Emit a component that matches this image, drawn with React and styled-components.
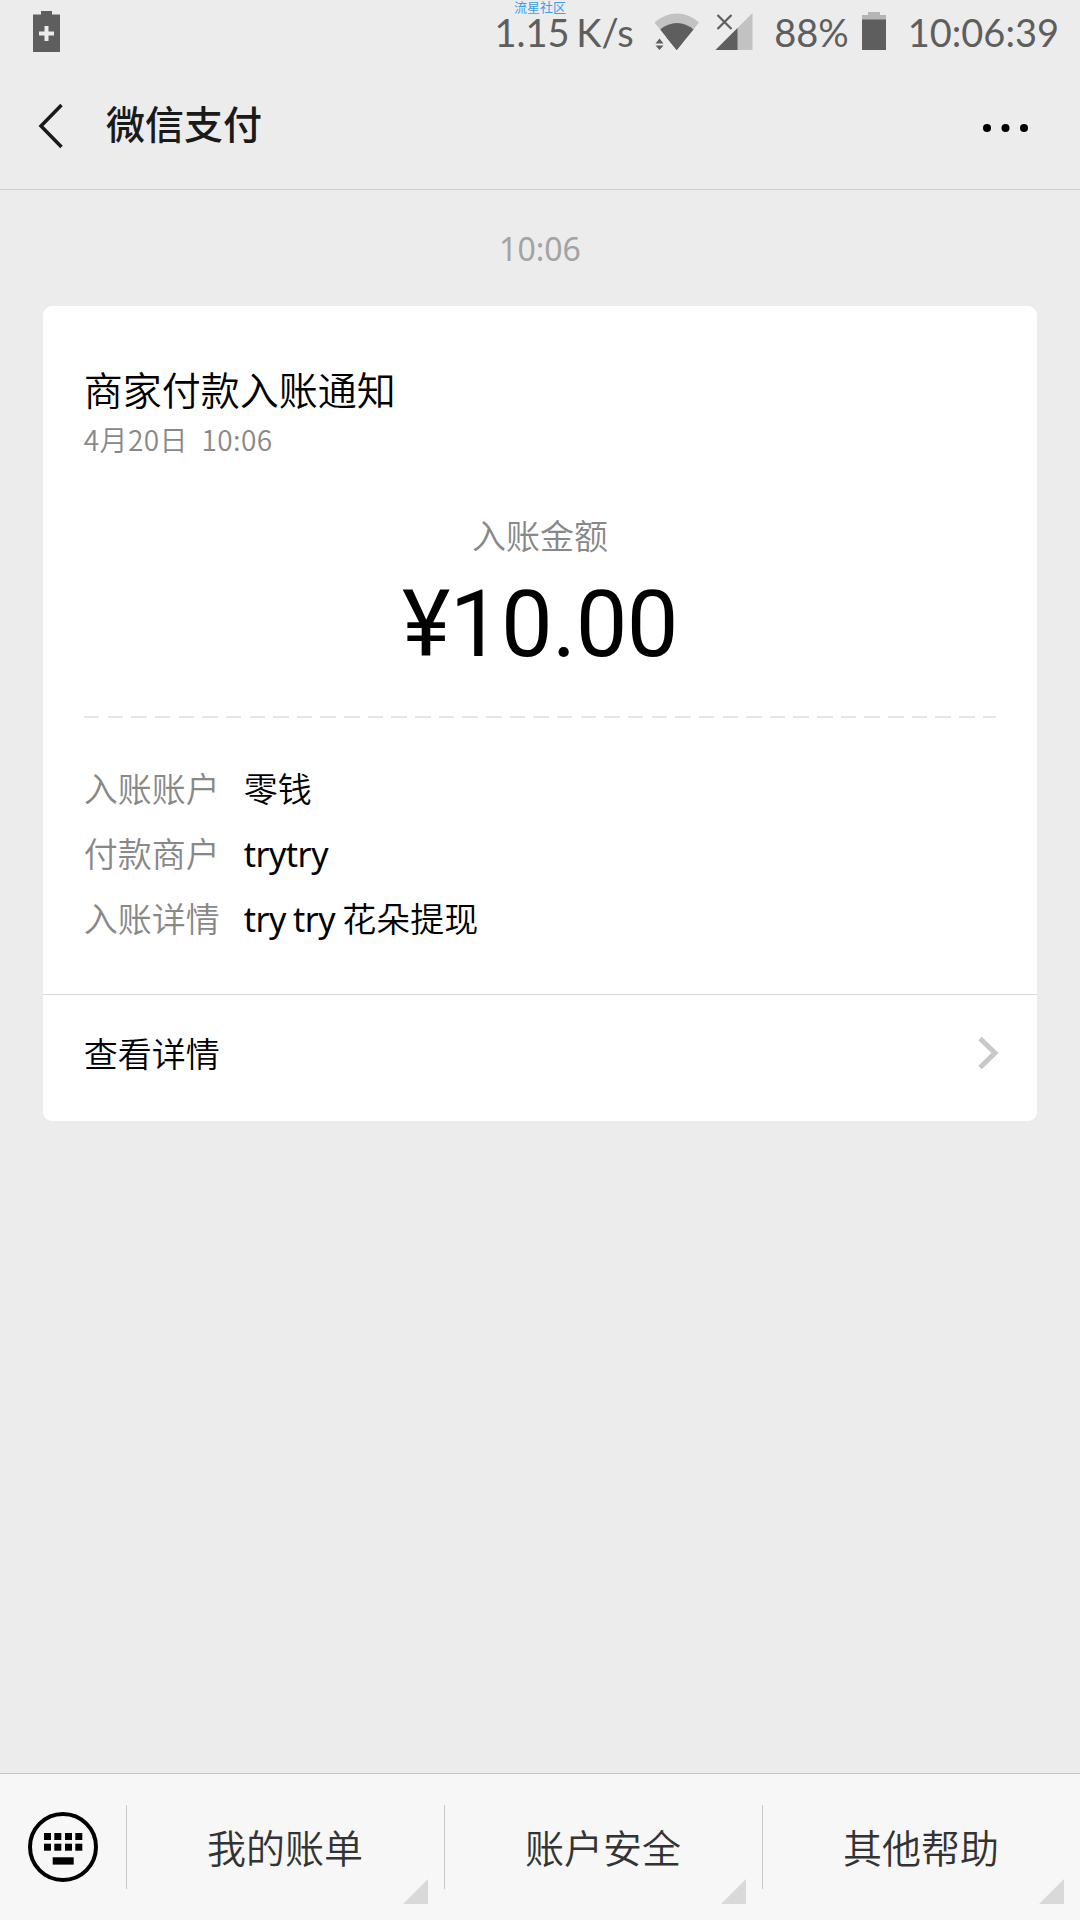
import React from "react";
import styled, { createGlobalStyle } from "styled-components";

const Global = createGlobalStyle`
  * { box-sizing: border-box; }
  body { margin: 0; background: #ececec; }
`;
const CJK = `"Noto Sans CJK SC", sans-serif`;

const Screen = styled.div`
  width: 1080px;
  height: 1920px;
  display: flex;
  flex-direction: column;
  background: #ececec;
  font-family: ${CJK};
  color: #000;
  overflow: hidden;
  position: relative;
`;
const StatusBar = styled.div`
  height: 66px;
  display: flex;
  align-items: center;
  padding: 0 21px 4px 33px;
  color: #5e5e5e;
  flex: none;
`;
const StatusText = styled.span`
  font-family: Lato, ${CJK};
  font-size: 38px;
  line-height: 62px;
  padding-top: 2px;
  white-space: pre;
  word-spacing: -3px;
  margin-left: ${(p) => p.$gap || 0}px;
`;
const Push = styled.div`
  flex: 1;
`;
const Icon = styled.svg`
  display: block;
  flex: none;
  margin-left: ${(p) => p.$gap || 0}px;
`;
const Watermark = styled.div`
  position: absolute;
  top: 0;
  left: 514px;
  font-size: 13px;
  line-height: 13px;
  color: #3d9fee;
`;
const Header = styled.header`
  height: 124px;
  flex: none;
  display: flex;
  align-items: center;
  padding: 0 51px 0 38px;
  border-bottom: 1px solid #cfcfcf;
`;
const BackIcon = styled(Icon)`
  margin-bottom: 4px;
`;
const Title = styled.h1`
  margin: 0 0 11px 42px;
  font-size: 39px;
  line-height: 56px;
  font-weight: 500;
  color: #1a1a1a;
`;
const Chat = styled.main`
  flex: 1;
  display: flex;
  flex-direction: column;
  padding: 0 42.67px;
`;
const Timestamp = styled.div`
  height: 116.33px;
  line-height: 118px;
  text-align: center;
  font-size: 32px;
  font-family: "Noto Sans", ${CJK};
  color: #a3a3a3;
`;
const Card = styled.section`
  height: 814.67px;
  border-radius: 9px;
  background: #fff;
  display: flex;
  flex-direction: column;
`;
const CardBody = styled.div`
  height: 687.67px;
  padding: 53.67px 41px 0;
  display: flex;
  flex-direction: column;
`;
const CardTitle = styled.h2`
  margin: 0;
  font-size: 39px;
  font-weight: 350;
  line-height: 56px;
`;
const CardDate = styled.div`
  font-size: 28px;
  font-weight: 350;
  line-height: 46px;
  color: #888;
  white-space: pre;
  letter-spacing: 0.45px;
`;
const AmountLabel = styled.div`
  margin-top: 50px;
  text-align: center;
  font-size: 34px;
  font-weight: 350;
  line-height: 46px;
  color: #888;
`;
const Amount = styled.div`
  margin-top: 3px;
  text-align: center;
  font-family: Roboto, sans-serif;
  font-size: 92px;
  line-height: 128px;
  letter-spacing: -0.6px;
`;
const Dashes = styled.div`
  height: 2px;
  margin-top: 27px;
  background: repeating-linear-gradient(90deg, #e6e6e6 0 15.5px, transparent 15.5px 23.65px);
`;
const Rows = styled.dl`
  margin: 37px 0 0;
`;
const Row = styled.div`
  display: flex;
  align-items: baseline;
  height: 65px;
  line-height: 65px;
  font-size: 34px;
  font-weight: 350;
`;
const Label = styled.dt`
  width: 160px;
  color: #888;
`;
const Value = styled.dd`
  margin: 0;
  color: #000;
`;
const Latin = styled.span`
  font-family: "Noto Sans", ${CJK};
  font-weight: 400;
  letter-spacing: -0.5px;
  word-spacing: -1.2px;
  white-space: pre;
`;
const DetailLink = styled.a`
  flex: 1;
  display: flex;
  align-items: center;
  justify-content: space-between;
  padding: 0 38px 10px 41px;
  border-top: 1px solid #d9d9d9;
  font-size: 34px;
  font-weight: 350;
`;
const MenuBar = styled.nav`
  height: 147px;
  flex: none;
  display: flex;
  background: #f7f7f7;
  border-top: 1px solid #c4c4c4;
`;
const KeyboardButton = styled.div`
  width: 126px;
  display: flex;
  justify-content: center;
  align-items: center;
`;
const MenuItem = styled.div`
  flex: 1;
  position: relative;
  display: flex;
  align-items: center;
  justify-content: center;
  font-size: 39px;
  font-weight: 350;
  color: #333;
  padding-bottom: 3px;
  &::before {
    content: "";
    position: absolute;
    left: 0;
    top: 31px;
    width: 1px;
    height: 84px;
    background: #c8c8c8;
  }
`;
const Corner = styled.i`
  position: absolute;
  right: 16px;
  bottom: 16px;
  width: 25px;
  height: 25px;
  background: #d9d9d9;
  clip-path: polygon(100% 0, 100% 100%, 0 100%);
`;

const details = [
  { label: "入账账户", value: "零钱" },
  { label: "付款商户", latin: "trytry" },
  { label: "入账详情", latin: "try try ", value: "花朵提现" },
];
const menu = ["我的账单", "账户安全", "其他帮助"];

export default function App() {
  return (
    <Screen>
      <Global />
      <StatusBar>
        <Icon width="27" height="41" viewBox="0 0 27 41">
          <path fill="#5e5e5e" d="M8 0h11v3.500h8V41H0V3.500h8z" />
          <path fill="#ececec" d="M11.500 15h4v5.500h5.500v4h-5.500V30h-4v-5.500H6v-4h5.500z" />
        </Icon>
        <Push />
        <StatusText>1.15 K/s</StatusText>
        <Icon $gap={20.5} width="46" height="38" viewBox="0 0 46 38">
          <path fill="#c2c2c2" d="M0.500 10.500Q11 1.500 23 1.500T45 10.500L22.700 38z" />
          <path fill="#5e5e5e" d="M6.200 17.500Q14 11 23 11T39.500 17.500L22.700 38z" />
          <path fill="#ececec" d="M0 25.500h11.500l4 6-4 6.500H0z" />
          <path fill="#5e5e5e" d="M1.500 31.500l4-5 4 5zM1.500 33.500h8l-4 4.500z" />
          <path fill="#5e5e5e" d="M12.300 25.200L22.700 38l6-7.500-8-8z" />
        </Icon>
        <Icon $gap={15} width="38" height="38" viewBox="0 0 38 38">
          <path fill="#c2c2c2" d="M37.500 1v37H0.500z" />
          <path fill="#5e5e5e" d="M22.500 16v22H0.500z" />
          <path stroke="#5e5e5e" strokeWidth="2.200" d="M2.500 3l14 14M16.500 3L2.500 17" />
        </Icon>
        <StatusText $gap={21}>88%</StatusText>
        <Icon $gap={13} width="24" height="38" viewBox="0 0 24 38">
          <path fill="#b5b5b5" d="M6 0h12v3h6v5H0V3h6z" />
          <path fill="#5e5e5e" d="M0 7.500h24V38H0z" />
        </Icon>
        <StatusText $gap={22}>10:06:39</StatusText>
      </StatusBar>
      <Watermark>流星社区</Watermark>
      <Header>
        <BackIcon width="26" height="46" viewBox="0 0 26 46" fill="none" stroke="#1a1a1a" strokeWidth="3.500">
          <path d="M23.500 2L3 23l20.500 21" />
        </BackIcon>
        <Title>微信支付</Title>
        <Push />
        <Icon width="46" height="8" viewBox="0 0 46 8">
          <circle cx="4" cy="4" r="4" />
          <circle cx="22.500" cy="4" r="4" />
          <circle cx="41" cy="4" r="4" />
        </Icon>
      </Header>
      <Chat>
        <Timestamp>10:06</Timestamp>
        <Card>
          <CardBody>
            <CardTitle>商家付款入账通知</CardTitle>
            <CardDate>{"4月20日  10:06"}</CardDate>
            <AmountLabel>入账金额</AmountLabel>
            <Amount>¥10.00</Amount>
            <Dashes />
            <Rows>
              {details.map(({ label, latin, value }) => (
                <Row key={label}>
                  <Label>{label}</Label>
                  <Value>
                    {latin && <Latin>{latin}</Latin>}
                    {value}
                  </Value>
                </Row>
              ))}
            </Rows>
          </CardBody>
          <DetailLink>
            查看详情
            <Icon width="22" height="34" viewBox="0 0 22 34" fill="none" stroke="#c7c8ca" strokeWidth="5">
              <path d="M3 2.500L18 17 3 31.500" />
            </Icon>
          </DetailLink>
        </Card>
      </Chat>
      <MenuBar>
        <KeyboardButton>
          <Icon width="70" height="70" viewBox="0 0 70 70">
            <circle cx="35" cy="35" r="33" fill="none" stroke="#000" strokeWidth="4" />
            {[16, 26.3, 37, 47.3].map((x) => (
              <React.Fragment key={x}>
                <rect x={x} y="21" width="7" height="7" />
                <rect x={x} y="31.700" width="7" height="7" />
              </React.Fragment>
            ))}
            <rect x="24.700" y="45.300" width="21" height="7.300" />
          </Icon>
        </KeyboardButton>
        {menu.map((m) => (
          <MenuItem key={m}>
            {m}
            <Corner />
          </MenuItem>
        ))}
      </MenuBar>
    </Screen>
  );
}
